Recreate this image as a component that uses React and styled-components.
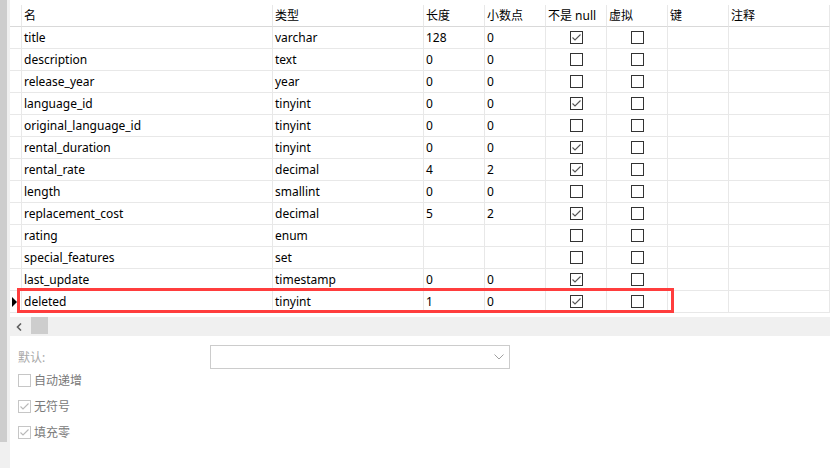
import React from "react";
import styled, { createGlobalStyle } from "styled-components";

const GlobalStyle = createGlobalStyle`
  html, body { margin: 0; padding: 0; background: #ffffff; }
  body {
    font-family: "Noto Sans", "Noto Sans CJK SC", sans-serif;
    font-size: 12px;
    color: #000;
  }
  * { box-sizing: border-box; }
`;

const Page = styled.div`
  display: flex;
  width: 830px;
  height: 468px;
  overflow: hidden;
`;

const SideRail = styled.div`
  width: 10px;
  flex: 0 0 10px;
  background: #f0f0f0;
  display: flex;
  flex-direction: column;
`;

const RailBar = styled.div`
  width: 7px;
  height: 442px;
  background: #cdcdcd;
`;

const Main = styled.div`
  flex: 1;
  display: flex;
  flex-direction: column;
  min-width: 0;
`;

const GridWrap = styled.div`
  position: relative;
  padding-top: 5px;
  height: 317px;
  flex: 0 0 317px;
  background: #fff;
`;

const Grid = styled.div`
  display: grid;
  grid-template-columns: 12px 251px 151px 61px 61px 61px 61px 61px 1fr;
  grid-auto-rows: 22px;
`;

const Cell = styled.div`
  display: flex;
  align-items: center;
  justify-content: ${(p) => (p.$center ? "center" : "flex-start")};
  padding-left: ${(p) => (p.$center ? "0" : "2px")};
  border-right: 1px solid #e8e8e8;
  border-bottom: 1px solid ${(p) => (p.$head ? "#d9d9d9" : "#e8e8e8")};
  white-space: nowrap;
  overflow: hidden;
  line-height: 1;
`;

const Indicator = styled.span`
  width: 0;
  height: 0;
  border-left: 5px solid #000;
  border-top: 5px solid transparent;
  border-bottom: 5px solid transparent;
`;

const Box = styled.span`
  width: 13px;
  height: 13px;
  border: 1px solid ${(p) => (p.$muted ? "#c6c6c6" : "#333333")};
  background: #fff;
  display: inline-flex;
  align-items: center;
  justify-content: center;
  flex: 0 0 13px;
`;

const Highlight = styled.div`
  position: absolute;
  left: 7px;
  top: 288px;
  width: 657px;
  height: 25px;
  border: 3px solid #ff3d3d;
  pointer-events: none;
`;

const HScroll = styled.div`
  height: 19px;
  flex: 0 0 19px;
  background: #f0f0f0;
  display: flex;
  align-items: center;
  gap: 7px;
  padding-left: 4px;
`;

const ArrowBtn = styled.span`
  width: 10px;
  height: 17px;
  display: inline-flex;
  align-items: center;
  justify-content: center;
`;

const Thumb = styled.span`
  width: 17px;
  height: 17px;
  background: #cdcdcd;
  align-self: flex-start;
`;

const Props = styled.div`
  flex: 1;
  background: #fff;
  padding: 11px 0 0 8px;
  display: flex;
  flex-direction: column;
`;

const FieldRow = styled.div`
  display: flex;
  align-items: center;
  height: 20px;
  flex: 0 0 20px;
`;

const FieldLabel = styled.span`
  width: 192px;
  flex: 0 0 192px;
  color: #a8a8a8;
`;

const Select = styled.div`
  width: 300px;
  flex: 0 0 300px;
  height: 24px;
  border: 1px solid #cccccc;
  display: flex;
  align-items: center;
  justify-content: flex-end;
  padding-right: 5px;
`;

const CheckRow = styled.label`
  display: flex;
  align-items: center;
  gap: 3px;
  height: 26px;
  flex: 0 0 26px;
  color: #7a7a7a;
`;

const Check = ({ checked, muted }) => (
  <Box $muted={muted}>
    {checked && (
      <svg width="11" height="11" viewBox="0 0 11 11">
        <polyline
          points="1.5,5.5 4,8 9.5,2.5"
          fill="none"
          stroke={muted ? "#b8b8b8" : "#555"}
          strokeWidth="1.1"
        />
      </svg>
    )}
  </Box>
);

const headers = ["名", "类型", "长度", "小数点", "不是 null", "虚拟", "键", "注释"];

const rows = [
  ["title", "varchar", "128", "0", true],
  ["description", "text", "0", "0", false],
  ["release_year", "year", "0", "0", false],
  ["language_id", "tinyint", "0", "0", true],
  ["original_language_id", "tinyint", "0", "0", false],
  ["rental_duration", "tinyint", "0", "0", true],
  ["rental_rate", "decimal", "4", "2", true],
  ["length", "smallint", "0", "0", false],
  ["replacement_cost", "decimal", "5", "2", true],
  ["rating", "enum", "", "", false],
  ["special_features", "set", "", "", false],
  ["last_update", "timestamp", "0", "0", true],
  ["deleted", "tinyint", "1", "0", true],
];

export default function App() {
  return (
    <>
      <GlobalStyle />
      <Page>
        <SideRail>
          <RailBar />
        </SideRail>
        <Main>
          <GridWrap>
            <Grid>
              <Cell $head />
              {headers.map((h) => (
                <Cell $head key={h}>
                  {h}
                </Cell>
              ))}
              {rows.map((r, i) => (
                <React.Fragment key={r[0]}>
                  <Cell>{i === rows.length - 1 && <Indicator />}</Cell>
                  <Cell>{r[0]}</Cell>
                  <Cell>{r[1]}</Cell>
                  <Cell>{r[2]}</Cell>
                  <Cell>{r[3]}</Cell>
                  <Cell $center>
                    <Check checked={r[4]} />
                  </Cell>
                  <Cell $center>
                    <Check checked={false} />
                  </Cell>
                  <Cell />
                  <Cell />
                </React.Fragment>
              ))}
            </Grid>
            <Highlight />
          </GridWrap>
          <HScroll>
            <ArrowBtn>
              <svg width="6" height="8" viewBox="0 0 6 8">
                <polyline points="5,0.5 1.5,4 5,7.5" fill="none" stroke="#606060" strokeWidth="1.6" />
              </svg>
            </ArrowBtn>
            <Thumb />
          </HScroll>
          <Props>
            <FieldRow>
              <FieldLabel>默认:</FieldLabel>
              <Select>
                <svg width="10" height="6" viewBox="0 0 10 6">
                  <polyline points="0.5,0.5 5,5 9.5,0.5" fill="none" stroke="#a0a0a0" strokeWidth="1" />
                </svg>
              </Select>
            </FieldRow>
            <CheckRow>
              <Check muted checked={false} />
              自动递增
            </CheckRow>
            <CheckRow>
              <Check muted checked />
              无符号
            </CheckRow>
            <CheckRow>
              <Check muted checked />
              填充零
            </CheckRow>
          </Props>
        </Main>
      </Page>
    </>
  );
}
